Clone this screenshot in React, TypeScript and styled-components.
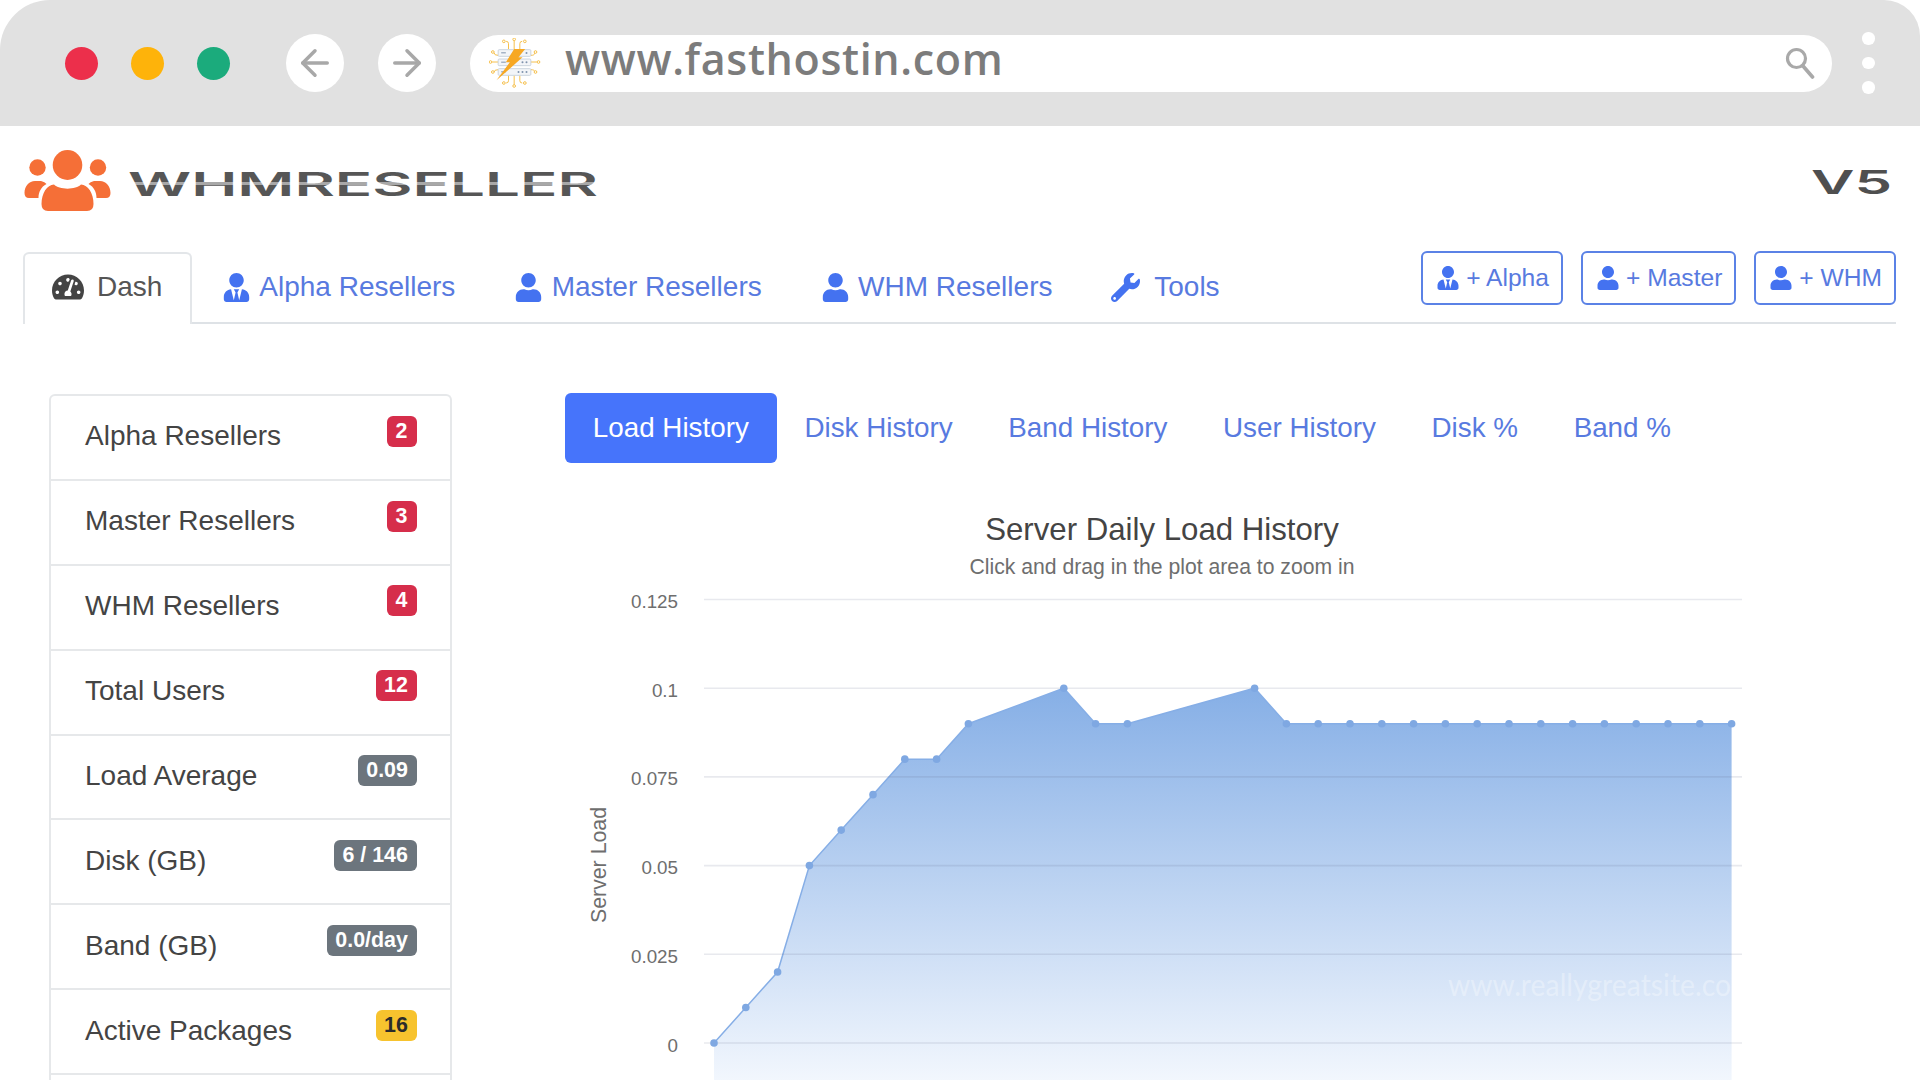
import { ReactNode } from "react";
import styled, { createGlobalStyle } from "styled-components";
import { ArrowLeft, ArrowRight } from "lucide-react";
import { FaTachometerAlt, FaUser, FaUserTie, FaWrench } from "react-icons/fa";

const GlobalStyle = createGlobalStyle`
  * { box-sizing: border-box; }
  html, body { margin: 0; padding: 0; background: #fff; }
  body { font-family: "Liberation Sans", Arial, sans-serif; color: #444; }
`;

const Page = styled.div`
  width: 1920px;
  height: 1080px;
  overflow: hidden;
  background: #fff;
  display: flex;
  flex-direction: column;
`;

/* browser chrome */
const BrowserBar = styled.div`
  flex: 0 0 126px;
  display: flex;
  align-items: center;
  padding: 0 0 0 65px;
  background: #e1e1e1;
  border-radius: 50px 36px 0 0;
`;
const Lights = styled.div`
  display: flex;
  gap: 33px;
  margin-right: 56px;
`;
const Light = styled.span<{ $color: string }>`
  width: 33px;
  height: 33px;
  border-radius: 50%;
  background: ${(p) => p.$color};
`;
const NavCircle = styled.span`
  width: 58px;
  height: 58px;
  margin-right: 34px;
  border-radius: 50%;
  background: #fff;
  color: #a8a8a8;
  display: flex;
  align-items: center;
  justify-content: center;
`;
const AddressBar = styled.div`
  width: 1362px;
  height: 57px;
  padding: 0 17px 0 19px;
  border-radius: 29px;
  background: #fff;
  display: flex;
  align-items: center;
  color: #a9a9a9;
`;
const Url = styled.span`
  flex: 1;
  margin-left: 24px;
  padding-bottom: 9px;
  font-family: "Open Sans", sans-serif;
  font-size: 43px;
  font-weight: 600;
  letter-spacing: 0.65px;
  color: #7c7c7c;
`;
const MenuDots = styled.div`
  margin-left: 30px;
  display: flex;
  flex-direction: column;
  gap: 12px;
`;
const MenuDot = styled.span`
  width: 12.5px;
  height: 12.5px;
  border-radius: 50%;
  background: #fff;
`;

/* logo row */
const Header = styled.header`
  flex: 0 0 126px;
  display: flex;
  justify-content: space-between;
  padding: 23px 28px 0 24px;
`;
const Brand = styled.div`
  display: flex;
  gap: 17px;
  align-items: flex-start;
  height: 63px;
`;
const BrandWord = styled.svg`
  display: block;
  margin-top: 12px;
`;
const Version = styled.svg`
  display: block;
  margin-top: 9px;
`;
const LogoText = styled.text`
  font-family: "Inter", sans-serif;
  font-weight: 600;
  font-size: 33px;
`;

/* main tabs */
const TabBar = styled.nav`
  flex: 0 0 72px;
  min-height: 0;
  margin: 0 24px 0 23px;
  display: flex;
  align-items: flex-start;
  border-bottom: 2px solid #dee2e6;
`;
const Tab = styled.a<{ $active?: boolean; $gap: number }>`
  height: ${(p) => (p.$active ? "72px" : "70px")};
  padding: ${(p) => (p.$active ? "0 28px 4px 27px" : "0 27.4px 2px")};
  display: flex;
  align-items: center;
  gap: ${(p) => p.$gap}px;
  font-size: 28px;
  color: ${(p) => (p.$active ? "#555" : "#587ae0")};
  background: #fff;
  border: 2px solid ${(p) => (p.$active ? "#e3e6e9" : "transparent")};
  border-bottom: 0;
  border-radius: ${(p) => (p.$active ? "6px 6px 0 0" : "0")};
  svg {
    flex: none;
    color: ${(p) => (p.$active ? "#444" : "#4472f0")};
  }
`;
const AddButtons = styled.div`
  margin: -1px 0 0 auto;
  display: flex;
  gap: 18px;
  height: 54px;
`;
const AddButton = styled.a`
  padding: 0 12px 0 13px;
  display: flex;
  align-items: center;
  gap: 6px;
  font-size: 24.6px;
  color: #587ae0;
  border: 2px solid #5b82e6;
  border-radius: 6px;
  svg {
    color: #4472f0;
  }
`;

/* dashboard */
const Dashboard = styled.main`
  flex: 1;
  min-height: 0;
  display: flex;
  gap: 113px;
  padding: 69px 0 0 49px;
`;
const StatList = styled.ul`
  flex: 0 0 403px;
  margin: 1px 0 0;
  padding: 0;
  list-style: none;
  border: 2px solid #e6e8ea;
  border-bottom: 0;
  border-radius: 6px 6px 0 0;
  height: 800px;
`;
const StatRow = styled.li`
  height: 84.9px;
  padding: 0 33.5px 2px 34px;
  display: flex;
  justify-content: space-between;
  align-items: center;
  font-size: 28px;
  color: #444;
  border-bottom: 2px solid #e6e8ea;
`;
const Badge = styled.span<{ $bg: string; $fg?: string }>`
  margin-top: -10.5px;
  padding: 0 8.6px;
  height: 31px;
  min-width: 30px;
  display: flex;
  align-items: center;
  justify-content: center;
  font-size: 21.4px;
  font-weight: 700;
  color: ${(p) => p.$fg ?? "#fff"};
  background: ${(p) => p.$bg};
  border-radius: 6px;
`;
const ChartColumn = styled.section`
  width: 1200px;
  display: flex;
  flex-direction: column;
`;
const Pills = styled.div`
  display: flex;
  height: 70px;
`;
const Pill = styled.a<{ $active?: boolean }>`
  padding: 0 27.8px;
  display: flex;
  align-items: center;
  font-size: 27.8px;
  color: ${(p) => (p.$active ? "#fff" : "#587ae0")};
  background: ${(p) => (p.$active ? "#4674fb" : "transparent")};
  border-radius: 6px;
`;
const ChartSvg = styled.svg`
  display: block;
  width: 1200px;
  height: 617px;
`;
const ChartTitle = styled.text`
  font-size: 31.2px;
  fill: #444;
  text-anchor: middle;
`;
const ChartSubtitle = styled.text`
  font-size: 21.2px;
  fill: #6e6e6e;
  text-anchor: middle;
`;
const AxisLabel = styled.text`
  font-size: 18.8px;
  fill: #6e6e6e;
  text-anchor: end;
`;
const AxisTitle = styled.text`
  font-size: 21.3px;
  fill: #6e6e6e;
  text-anchor: middle;
`;
const Watermark = styled.text`
  font-family: "Lato", sans-serif;
  font-size: 30px;
  fill: #fff;
  opacity: 0.32;
`;

const TICKS = ["0", "0.025", "0.05", "0.075", "0.1", "0.125"];
const Y_ZERO = 1043;
const Y_TOP = 599.5;
const X_ZERO = 714;
const X_STEP = 31.8;

// [point index, load]; the straight stretches have no marker in the reference
const LOAD: [number, number][] = [
  [0, 0], [1, 0.01], [2, 0.02], [3, 0.05], [4, 0.06], [5, 0.07], [6, 0.08],
  [7, 0.08], [8, 0.09], [11, 0.1], [12, 0.09], [13, 0.09], [17, 0.1],
  ...Array.from({ length: 15 }, (_, i): [number, number] => [18 + i, 0.09]),
];

const px = (i: number) => X_ZERO + i * X_STEP;
const py = (v: number) => Y_ZERO - (v / 0.125) * (Y_ZERO - Y_TOP);

const STATS: { label: string; value?: string; bg?: string; fg?: string }[] = [
  { label: "Alpha Resellers", value: "2", bg: "#d62e4b" },
  { label: "Master Resellers", value: "3", bg: "#d62e4b" },
  { label: "WHM Resellers", value: "4", bg: "#d62e4b" },
  { label: "Total Users", value: "12", bg: "#d62e4b" },
  { label: "Load Average", value: "0.09", bg: "#6c757d" },
  { label: "Disk (GB)", value: "6 / 146", bg: "#6c757d" },
  { label: "Band (GB)", value: "0.0/day", bg: "#6c757d" },
  { label: "Active Packages", value: "16", bg: "#f7c32e", fg: "#2b2b2b" },
  { label: "" },
];

function ServerLogo() {
  const nodes: [number, number][] = [
    [135, 59], [104, 65], [167, 65], [71, 97], [199, 97], [64, 127], [208, 127],
    [71, 157], [199, 157], [135, 199], [104, 190], [167, 190],
  ];
  return (
    <svg width="52" height="50" viewBox="60 55 155 150">
      <g fill="none" stroke="#f6c04c" strokeWidth="3">
        <path d="M135 88V62M118 88V72q0-7-7-7M152 88V72q0-7 7-7" />
        <path d="M135 168v28M118 168v15q0 7-7 7M152 168v15q0 7 7 7" />
        <path d="M87 127H69M185 127h18M87 107q-12 0-12-7M185 107q12 0 12-7M87 150q-12 0-12 7M185 150q12 0 12 7" />
        {nodes.map(([x, y]) => (
          <circle key={`${x}-${y}`} cx={x} cy={y} r="4" fill="#fff" />
        ))}
      </g>
      <g fill="#f3f5f8" stroke="#c3ccd9" strokeWidth="2.5">
        <rect x="87" y="90" width="98" height="20" rx="3" />
        <rect x="87" y="118" width="98" height="20" rx="3" />
        <rect x="87" y="147" width="98" height="20" rx="3" />
      </g>
      <g fill="#7f93ad">
        <rect x="96" y="98" width="14" height="3" />
        <rect x="96" y="126" width="14" height="3" />
        <rect x="96" y="155" width="14" height="3" />
        <circle cx="172" cy="100" r="3" />
        <circle cx="160" cy="128" r="3" />
        <circle cx="172" cy="128" r="3" />
        <circle cx="148" cy="157" r="3" />
        <circle cx="160" cy="157" r="3" />
        <circle cx="172" cy="157" r="3" />
      </g>
      <polygon points="135,88 168,88 148,113 160,113 82,182 122,128 110,128" fill="#f7a823" />
    </svg>
  );
}

function PeopleLogo() {
  return (
    <svg width="87" height="63" viewBox="0 0 87 63" fill="#f56f37">
      <ellipse cx="43.5" cy="16" rx="14.8" ry="15" />
      <circle cx="13.5" cy="18.5" r="8.2" />
      <circle cx="74" cy="18.5" r="8.2" />
      <path d="M17.5 55C17.5 44 23 36 30 35.5C35 41 52 41 57 35.5C64 36 69.5 44 69.5 55Q69.5 62 63 62H24Q17.5 62 17.5 55Z" />
      <path d="M0.5 44C0.5 37 5 32 11 32H17Q21 33 22.5 35C17 38 14.5 43 14.5 49H5Q0.5 49 0.5 44Z" />
      <path d="M86.5 44C86.5 37 82 32 76 32H70Q66 33 64.5 35C70 38 72.5 43 72.5 49H82Q86.5 49 86.5 44Z" />
    </svg>
  );
}

function SearchGlyph() {
  return (
    <svg width="30" height="32" viewBox="0 0 30 32" fill="none" stroke="currentColor" strokeLinecap="round">
      <circle cx="11.5" cy="11.5" r="9" strokeWidth="3.2" />
      <line x1="18" y1="19" x2="27.5" y2="30" strokeWidth="3.6" />
    </svg>
  );
}

function TabLink({ icon, label, active, gap = 8.5 }: { icon: ReactNode; label: string; active?: boolean; gap?: number }) {
  return (
    <Tab $active={active} $gap={gap}>
      {icon}
      {label}
    </Tab>
  );
}

function LoadChart() {
  const line = LOAD.map(([i, v]) => `${px(i)} ${py(v)}`).join(" L");
  const last = LOAD[LOAD.length - 1][0];
  return (
    <ChartSvg viewBox="565 463 1200 617">
      <defs>
        <linearGradient id="loadFill" gradientUnits="userSpaceOnUse" x1="0" y1="689" x2="0" y2="1110">
          <stop offset="0" stopColor="#86afe6" />
          <stop offset="1" stopColor="#fafcff" />
        </linearGradient>
      </defs>
      <ChartTitle x="1162" y="540">Server Daily Load History</ChartTitle>
      <ChartSubtitle x="1162" y="574">Click and drag in the plot area to zoom in</ChartSubtitle>
      <AxisTitle transform="translate(606 865) rotate(-90)">Server Load</AxisTitle>
      {TICKS.map((t, i) => (
        <AxisLabel key={t} x="678" y={py(i * 0.025) + 8.5}>
          {t}
        </AxisLabel>
      ))}
      <path d={`M${line} L${px(last)} 1090 L${X_ZERO} 1090 Z`} fill="url(#loadFill)" />
      <path d={`M${line}`} fill="none" stroke="#86aee6" strokeWidth="1.5" />
      {TICKS.map((t, i) => (
        <line
          key={t}
          x1="704"
          x2="1742"
          y1={py(i * 0.025)}
          y2={py(i * 0.025)}
          stroke="rgba(100,110,140,0.15)"
          strokeWidth="1.6"
        />
      ))}
      {LOAD.map(([i, v]) => (
        <circle key={i} cx={px(i)} cy={py(v)} r="3.8" fill="#7fa8e2" />
      ))}
      <Watermark x="1448" y="996" textLength="283" lengthAdjust="spacingAndGlyphs">
        www.reallygreatsite.co
      </Watermark>
    </ChartSvg>
  );
}

export default function App() {
  return (
    <Page>
      <GlobalStyle />
      <BrowserBar>
        <Lights>
          <Light $color="#ec2f4b" />
          <Light $color="#feb30a" />
          <Light $color="#1bab7c" />
        </Lights>
        <NavCircle>
          <ArrowLeft size={42} strokeWidth={2} />
        </NavCircle>
        <NavCircle>
          <ArrowRight size={42} strokeWidth={2} />
        </NavCircle>
        <AddressBar>
          <ServerLogo />
          <Url>www.fasthostin.com</Url>
          <SearchGlyph />
        </AddressBar>
        <MenuDots>
          <MenuDot />
          <MenuDot />
          <MenuDot />
        </MenuDots>
      </BrowserBar>

      <Header>
        <Brand>
          <PeopleLogo />
          <BrandWord width="470" height="46" viewBox="0 0 470 46">
            <defs>
              <linearGradient id="logoInk" gradientUnits="userSpaceOnUse" x1="0" y1="10" x2="0" y2="35">
                <stop offset="0.44" stopColor="#565656" />
                <stop offset="0.44" stopColor="#a8a8a8" />
                <stop offset="0.54" stopColor="#a8a8a8" />
                <stop offset="0.54" stopColor="#565656" />
              </linearGradient>
            </defs>
            <LogoText x="0" y="34.5" fill="url(#logoInk)" textLength="470" lengthAdjust="spacingAndGlyphs">
              WHMRESELLER
            </LogoText>
          </BrandWord>
        </Brand>
        <Version width="81" height="46" viewBox="0 0 81 46">
          <LogoText x="0" y="35.5" fill="#4f4f4f" textLength="81" lengthAdjust="spacingAndGlyphs">
            V5
          </LogoText>
        </Version>
      </Header>

      <TabBar>
        <TabLink active gap={13} icon={<FaTachometerAlt size={32} />} label="Dash" />
        <TabLink icon={<FaUserTie size={29} />} label="Alpha Resellers" />
        <TabLink icon={<FaUser size={29} />} label="Master Resellers" />
        <TabLink icon={<FaUser size={29} />} label="WHM Resellers" />
        <TabLink gap={14} icon={<FaWrench size={29} />} label="Tools" />
        <AddButtons>
          <AddButton>
            <FaUserTie size={24} />+ Alpha
          </AddButton>
          <AddButton>
            <FaUser size={24} />+ Master
          </AddButton>
          <AddButton>
            <FaUser size={24} />+ WHM
          </AddButton>
        </AddButtons>
      </TabBar>

      <Dashboard>
        <StatList>
          {STATS.map((s) => (
            <StatRow key={s.label}>
              {s.label}
              {s.value && (
                <Badge $bg={s.bg as string} $fg={s.fg}>
                  {s.value}
                </Badge>
              )}
            </StatRow>
          ))}
        </StatList>
        <ChartColumn>
          <Pills>
            <Pill $active>Load History</Pill>
            <Pill>Disk History</Pill>
            <Pill>Band History</Pill>
            <Pill>User History</Pill>
            <Pill>Disk %</Pill>
            <Pill>Band %</Pill>
          </Pills>
          <LoadChart />
        </ChartColumn>
      </Dashboard>
    </Page>
  );
}
